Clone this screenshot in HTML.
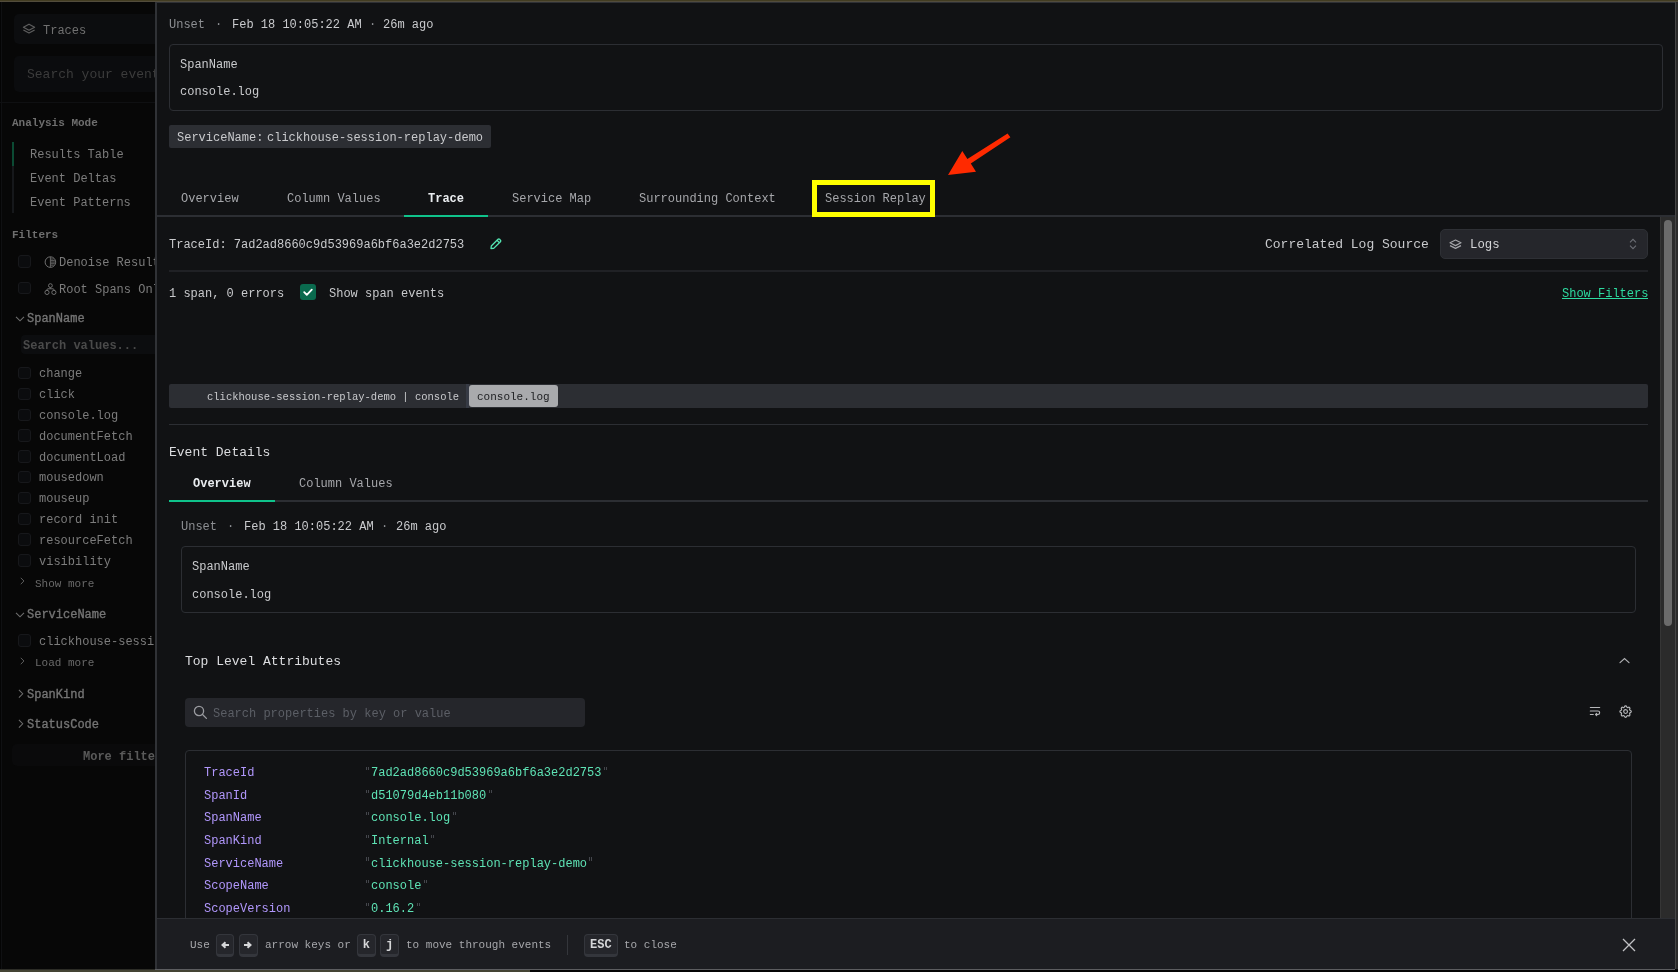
<!DOCTYPE html>
<html><head><meta charset="utf-8"><title>Trace</title>
<style>
html,body{margin:0;padding:0;width:1678px;height:972px;overflow:hidden;background:#070707;}
body{position:relative;font-family:"Liberation Mono",monospace;}
.t{position:absolute;white-space:pre;will-change:transform;}
.r{position:absolute;}
.kbd{background:#25262b;border:1px solid #34363c;border-bottom:3px solid #34363c;border-radius:4px;box-sizing:border-box;}
</style></head><body>
<div class="r" style="left:0px;top:0px;width:155px;height:972px;background:#070707;"></div>
<div class="r" style="left:0px;top:0px;width:1px;height:972px;background:#040404;"></div>
<div class="r" style="left:1px;top:0px;width:1px;height:972px;background:#0f1012;"></div>
<div class="r" style="left:14px;top:14.4px;width:150px;height:29.8px;background:#0c0d0f;border-radius:5px;"></div>
<svg class="r" style="left:22px;top:23px" width="14" height="12" viewBox="0 0 14 12"><path d="M7 1.2 L12.6 4.2 L7 7.2 L1.4 4.2 Z" fill="none" stroke="#5e5e5e" stroke-width="1.2" stroke-linejoin="round"/><path d="M1.4 7 L7 10 L12.6 7" fill="none" stroke="#5e5e5e" stroke-width="1.2" stroke-linejoin="round"/></svg>
<div class="t" style="left:43.00px;top:24.21px;font-size:12px;line-height:15px;color:#707070;">Traces</div>
<div class="r" style="left:14px;top:56px;width:150px;height:35.8px;background:#0b0c0e;border-radius:5px;"></div>
<div class="t" style="left:26.60px;top:66.64px;font-size:13px;line-height:16px;color:#3c3c3c;">Search your events</div>
<div class="r" style="left:0px;top:102px;width:155px;height:1px;background:#0f1012;"></div>
<div class="t" style="left:12.20px;top:115.87px;font-size:11px;line-height:14px;color:#6e6e6e;font-weight:700;">Analysis Mode</div>
<div class="r" style="left:12px;top:142px;width:2px;height:24px;background:#0b4a33;"></div>
<div class="r" style="left:12px;top:166px;width:2px;height:47px;background:#16181b;"></div>
<div class="t" style="left:30.20px;top:148.21px;font-size:12px;line-height:15px;color:#7c7c7c;">Results Table</div>
<div class="t" style="left:30.20px;top:172.21px;font-size:12px;line-height:15px;color:#7c7c7c;">Event Deltas</div>
<div class="t" style="left:30.20px;top:195.91px;font-size:12px;line-height:15px;color:#7c7c7c;">Event Patterns</div>
<div class="t" style="left:12.20px;top:228.47px;font-size:11px;line-height:14px;color:#6e6e6e;font-weight:700;">Filters</div>
<div class="r" style="left:18.4px;top:255.3px;width:12.3px;height:12.3px;background:#0b0c0e;border:1px solid #17181b;border-radius:3px;box-sizing:border-box;"></div>
<div class="r" style="left:18.4px;top:282.2px;width:12.3px;height:12.3px;background:#0b0c0e;border:1px solid #17181b;border-radius:3px;box-sizing:border-box;"></div>
<svg class="r" style="left:43.5px;top:255.5px" width="13" height="13" viewBox="0 0 13 13"><circle cx="6.4" cy="6.1" r="5.3" fill="none" stroke="#707070" stroke-width="1"/><path d="M6.4 0.8 V11.4 M6.4 3.0 H9.6 M6.4 4.6 H10.8 M6.4 6.1 H11.2 M6.4 7.7 H10.8 M6.4 9.2 H9.6" stroke="#707070" stroke-width="0.85"/></svg>
<div class="t" style="left:59.30px;top:256.01px;font-size:12px;line-height:15px;color:#7c7c7c;">Denoise Results</div>
<svg class="r" style="left:43.5px;top:282.5px" width="13" height="13" viewBox="0 0 13 13"><circle cx="6.4" cy="2.6" r="1.9" fill="none" stroke="#707070" stroke-width="1"/><circle cx="3" cy="9.4" r="2.1" fill="none" stroke="#707070" stroke-width="1"/><circle cx="9.9" cy="9.4" r="2.1" fill="none" stroke="#707070" stroke-width="1"/><path d="M6.4 4.5 V5.8 M3 7.3 V6.6 Q3 5.8 3.8 5.8 H9.1 Q9.9 5.8 9.9 6.6 V7.3" fill="none" stroke="#707070" stroke-width="1"/></svg>
<div class="t" style="left:59.30px;top:282.51px;font-size:12px;line-height:15px;color:#7c7c7c;">Root Spans Only</div>
<svg class="r" style="left:14.5px;top:315.5px" width="10" height="6" viewBox="0 0 10 6"><path d="M1 0.8 L5 4.8 L9 0.8" fill="none" stroke="#6e6e6e" stroke-width="1.1"/></svg>
<div class="t" style="left:27.40px;top:312.41px;font-size:12px;line-height:15px;color:#757575;-webkit-text-stroke:0.35px #757575;">SpanName</div>
<div class="r" style="left:20.9px;top:335.2px;width:140px;height:18.7px;background:#0c0d0f;border-radius:4px;"></div>
<div class="t" style="left:23.00px;top:338.81px;font-size:12px;line-height:15px;color:#4a4a4a;font-weight:700;">Search values...</div>
<div class="r" style="left:18.2px;top:366.90000000000003px;width:12.4px;height:12.4px;background:#0b0c0e;border:1px solid #17181b;border-radius:3px;box-sizing:border-box;"></div>
<div class="t" style="left:38.80px;top:367.31px;font-size:12px;line-height:15px;color:#7c7c7c;">change</div>
<div class="r" style="left:18.2px;top:387.72px;width:12.4px;height:12.4px;background:#0b0c0e;border:1px solid #17181b;border-radius:3px;box-sizing:border-box;"></div>
<div class="t" style="left:38.80px;top:388.13px;font-size:12px;line-height:15px;color:#7c7c7c;">click</div>
<div class="r" style="left:18.2px;top:408.54px;width:12.4px;height:12.4px;background:#0b0c0e;border:1px solid #17181b;border-radius:3px;box-sizing:border-box;"></div>
<div class="t" style="left:38.80px;top:408.95px;font-size:12px;line-height:15px;color:#7c7c7c;">console.log</div>
<div class="r" style="left:18.2px;top:429.36px;width:12.4px;height:12.4px;background:#0b0c0e;border:1px solid #17181b;border-radius:3px;box-sizing:border-box;"></div>
<div class="t" style="left:38.80px;top:429.77px;font-size:12px;line-height:15px;color:#7c7c7c;">documentFetch</div>
<div class="r" style="left:18.2px;top:450.18px;width:12.4px;height:12.4px;background:#0b0c0e;border:1px solid #17181b;border-radius:3px;box-sizing:border-box;"></div>
<div class="t" style="left:38.80px;top:450.59px;font-size:12px;line-height:15px;color:#7c7c7c;">documentLoad</div>
<div class="r" style="left:18.2px;top:471.00000000000006px;width:12.4px;height:12.4px;background:#0b0c0e;border:1px solid #17181b;border-radius:3px;box-sizing:border-box;"></div>
<div class="t" style="left:38.80px;top:471.41px;font-size:12px;line-height:15px;color:#7c7c7c;">mousedown</div>
<div class="r" style="left:18.2px;top:491.82000000000005px;width:12.4px;height:12.4px;background:#0b0c0e;border:1px solid #17181b;border-radius:3px;box-sizing:border-box;"></div>
<div class="t" style="left:38.80px;top:492.23px;font-size:12px;line-height:15px;color:#7c7c7c;">mouseup</div>
<div class="r" style="left:18.2px;top:512.64px;width:12.4px;height:12.4px;background:#0b0c0e;border:1px solid #17181b;border-radius:3px;box-sizing:border-box;"></div>
<div class="t" style="left:38.80px;top:513.05px;font-size:12px;line-height:15px;color:#7c7c7c;">record init</div>
<div class="r" style="left:18.2px;top:533.46px;width:12.4px;height:12.4px;background:#0b0c0e;border:1px solid #17181b;border-radius:3px;box-sizing:border-box;"></div>
<div class="t" style="left:38.80px;top:533.87px;font-size:12px;line-height:15px;color:#7c7c7c;">resourceFetch</div>
<div class="r" style="left:18.2px;top:554.28px;width:12.4px;height:12.4px;background:#0b0c0e;border:1px solid #17181b;border-radius:3px;box-sizing:border-box;"></div>
<div class="t" style="left:38.80px;top:554.69px;font-size:12px;line-height:15px;color:#7c7c7c;">visibility</div>
<svg class="r" style="left:19.5px;top:576.5px" width="5" height="8" viewBox="0 0 6 10"><path d="M0.8 1 L4.8 5 L0.8 9" fill="none" stroke="#6a6a6a" stroke-width="1.1"/></svg>
<div class="t" style="left:34.60px;top:576.57px;font-size:11px;line-height:14px;color:#6a6a6a;">Show more</div>
<svg class="r" style="left:14.5px;top:611.5px" width="10" height="6" viewBox="0 0 10 6"><path d="M1 0.8 L5 4.8 L9 0.8" fill="none" stroke="#6e6e6e" stroke-width="1.1"/></svg>
<div class="t" style="left:27.40px;top:608.01px;font-size:12px;line-height:15px;color:#757575;-webkit-text-stroke:0.35px #757575;">ServiceName</div>
<div class="r" style="left:18.2px;top:634.3px;width:12.4px;height:12.4px;background:#0b0c0e;border:1px solid #17181b;border-radius:3px;box-sizing:border-box;"></div>
<div class="t" style="left:38.80px;top:634.61px;font-size:12px;line-height:15px;color:#7c7c7c;">clickhouse-session-replay-demo</div>
<svg class="r" style="left:19.5px;top:656.5px" width="5" height="8" viewBox="0 0 6 10"><path d="M0.8 1 L4.8 5 L0.8 9" fill="none" stroke="#6a6a6a" stroke-width="1.1"/></svg>
<div class="t" style="left:35.30px;top:656.47px;font-size:11px;line-height:14px;color:#6a6a6a;">Load more</div>
<svg class="r" style="left:17.5px;top:689.2px" width="6" height="9.5" viewBox="0 0 6 10"><path d="M0.8 1 L4.8 5 L0.8 9" fill="none" stroke="#6e6e6e" stroke-width="1.1"/></svg>
<div class="t" style="left:27.30px;top:687.81px;font-size:12px;line-height:15px;color:#757575;-webkit-text-stroke:0.35px #757575;">SpanKind</div>
<svg class="r" style="left:17.5px;top:719.2px" width="6" height="9.5" viewBox="0 0 6 10"><path d="M0.8 1 L4.8 5 L0.8 9" fill="none" stroke="#6e6e6e" stroke-width="1.1"/></svg>
<div class="t" style="left:27.30px;top:717.71px;font-size:12px;line-height:15px;color:#757575;-webkit-text-stroke:0.35px #757575;">StatusCode</div>
<div class="r" style="left:12.1px;top:744.4px;width:150px;height:22px;background:#0a0a0b;border-radius:5px;"></div>
<div class="t" style="left:82.80px;top:750.11px;font-size:12px;line-height:15px;color:#5a5a5a;font-weight:700;">More filters</div>
<div class="r" style="left:155px;top:2px;width:1523px;height:967px;background:#111214;"></div>
<div class="r" style="left:155px;top:2px;width:2px;height:967px;background:#303236;"></div>
<div class="r" style="left:155px;top:2px;width:1523px;height:1px;background:#2e3035;"></div>
<div class="r" style="left:1675px;top:2px;width:1px;height:967px;background:#464646;"></div>
<div class="r" style="left:1676px;top:2px;width:2px;height:967px;background:#2a2a2a;"></div>
<div class="t" style="left:169.00px;top:18.21px;font-size:12px;line-height:15px;color:#8d8f93;">Unset</div>
<div class="t" style="left:214.60px;top:18.21px;font-size:12px;line-height:15px;color:#8d8f93;">·</div>
<div class="t" style="left:232.00px;top:18.21px;font-size:12px;line-height:15px;color:#c9cacd;">Feb 18 10:05:22 AM</div>
<div class="t" style="left:368.80px;top:18.21px;font-size:12px;line-height:15px;color:#8d8f93;">·</div>
<div class="t" style="left:383.40px;top:18.21px;font-size:12px;line-height:15px;color:#c9cacd;">26m ago</div>
<div class="r" style="left:169px;top:44.2px;width:1494px;height:66.4px;background:transparent;border:1px solid #2c2e33;border-radius:4px;box-sizing:border-box;"></div>
<div class="t" style="left:180.20px;top:58.21px;font-size:12px;line-height:15px;color:#c9cacd;">SpanName</div>
<div class="t" style="left:180.20px;top:85.21px;font-size:12px;line-height:15px;color:#c9cacd;">console.log</div>
<div class="r" style="left:169px;top:125px;width:322px;height:23px;background:#2c2e33;border-radius:2px;"></div>
<div class="t" style="left:177.00px;top:131.21px;font-size:12px;line-height:15px;color:#c9cacd;">ServiceName:</div>
<div class="t" style="left:267.00px;top:131.21px;font-size:12px;line-height:15px;color:#c9cacd;">clickhouse-session-replay-demo</div>
<div class="r" style="left:157px;top:214.5px;width:1518px;height:2px;background:#2c2e33;"></div>
<div class="t" style="left:181.30px;top:192.21px;font-size:12px;line-height:15px;color:#a6a7ab;">Overview</div>
<div class="t" style="left:287.00px;top:192.21px;font-size:12px;line-height:15px;color:#a6a7ab;">Column Values</div>
<div class="t" style="left:428.30px;top:192.21px;font-size:12px;line-height:15px;color:#e9ecef;font-weight:700;">Trace</div>
<div class="t" style="left:512.00px;top:192.21px;font-size:12px;line-height:15px;color:#a6a7ab;">Service Map</div>
<div class="t" style="left:639.00px;top:192.21px;font-size:12px;line-height:15px;color:#a6a7ab;">Surrounding Context</div>
<div class="t" style="left:824.60px;top:192.21px;font-size:12px;line-height:15px;color:#a6a7ab;">Session Replay</div>
<div class="r" style="left:404px;top:214.5px;width:84px;height:2.5px;background:#0fc38b;"></div>
<div class="r" style="left:812px;top:180px;width:123px;height:37px;background:transparent;border:5px solid #ffff00;box-sizing:border-box;"></div>
<svg class="r" style="left:0;top:0" width="1678" height="972" viewBox="0 0 1678 972"><polygon points="948,175 962.3,151 967.4,158.9 1007.6,133.5 1010.4,137.2 970.8,163.5 976,171.7" fill="#ff2a00"/></svg>
<div class="r" style="left:1660px;top:216.5px;width:15px;height:701.5px;background:#2b2b2b;"></div>
<div class="r" style="left:1660px;top:216.5px;width:1px;height:701.5px;background:#363636;"></div>
<div class="r" style="left:1664px;top:219.5px;width:8px;height:406px;background:#6b6b6b;border-radius:4px;"></div>
<div class="t" style="left:169.00px;top:238.21px;font-size:12px;line-height:15px;color:#c9cacd;">TraceId: 7ad2ad8660c9d53969a6bf6a3e2d2753</div>
<svg class="r" style="left:489px;top:237.5px" width="13" height="12" viewBox="0 0 13 12"><path d="M2 10.5 L2.3 8 L9 1.3 Q9.8 0.6 10.6 1.3 L11.4 2.1 Q12.1 2.9 11.4 3.7 L4.7 10.4 Z M8 2.3 L10.4 4.7" fill="none" stroke="#55e6b3" stroke-width="1.3" stroke-linejoin="round"/></svg>
<div class="t" style="left:1264.70px;top:237.44px;font-size:13px;line-height:16px;color:#c9cacd;">Correlated Log Source</div>
<div class="r" style="left:1440.3px;top:228.5px;width:207.7px;height:30.3px;background:#25262b;border:1px solid #2e3035;border-radius:5px;box-sizing:border-box;"></div>
<svg class="r" style="left:1449px;top:238.5px" width="13" height="11" viewBox="0 0 13 11"><path d="M6.5 1 L12 3.8 L6.5 6.6 L1 3.8 Z" fill="none" stroke="#a3a4a8" stroke-width="1.2" stroke-linejoin="round"/><path d="M1 6.6 L6.5 9.4 L12 6.6" fill="none" stroke="#a3a4a8" stroke-width="1.2" stroke-linejoin="round"/></svg>
<div class="t" style="left:1470.30px;top:238.43px;font-size:12.3px;line-height:15px;color:#d5d6d8;">Logs</div>
<svg class="r" style="left:1629px;top:237.5px" width="8" height="12" viewBox="0 0 8 12"><path d="M1 4.3 L4 1.3 L7 4.3 M1 7.7 L4 10.7 L7 7.7" fill="none" stroke="#6c6e75" stroke-width="1.1"/></svg>
<div class="r" style="left:169px;top:270px;width:1479px;height:2px;background:#202125;"></div>
<div class="t" style="left:169.00px;top:287.31px;font-size:12px;line-height:15px;color:#c9cacd;">1 span, 0 errors</div>
<div class="r" style="left:300px;top:284.4px;width:16px;height:16px;background:#0a6a4e;border-radius:3px;"></div>
<svg class="r" style="left:300px;top:284.4px" width="16" height="16" viewBox="0 0 16 16"><path d="M4.2 8.2 L6.8 10.8 L11.8 5.6" fill="none" stroke="#ffffff" stroke-width="1.8" stroke-linecap="round" stroke-linejoin="round"/></svg>
<div class="t" style="left:328.60px;top:287.31px;font-size:12px;line-height:15px;color:#c9cacd;">Show span events</div>
<div class="t" style="left:1561.60px;top:287.11px;font-size:12px;line-height:15px;color:#2ddba0;">Show Filters</div>
<div class="r" style="left:1561.6px;top:297.8px;width:86.4px;height:1.4px;background:#2ddba0;"></div>
<div class="r" style="left:169px;top:384.3px;width:1479px;height:23.7px;background:#2c2e33;border-radius:2px;"></div>
<div class="t" style="left:206.80px;top:390.81px;font-size:10.5px;line-height:13px;color:#c9cacd;">clickhouse-session-replay-demo | console</div>
<div class="r" style="left:466px;top:384.3px;width:3.2px;height:23.7px;background:#363a44;"></div>
<div class="r" style="left:469px;top:385px;width:89px;height:22px;background:#a9aaad;border-radius:3px;"></div>
<div class="t" style="left:477.40px;top:390.37px;font-size:11px;line-height:14px;color:#1d1e21;">console.log</div>
<div class="r" style="left:169px;top:424px;width:1479px;height:1.3px;background:#2c2e33;"></div>
<div class="t" style="left:169.30px;top:444.94px;font-size:13px;line-height:16px;color:#dcdde0;">Event Details</div>
<div class="r" style="left:169px;top:499.5px;width:1479px;height:2px;background:#2c2e33;"></div>
<div class="r" style="left:169px;top:499.5px;width:105.7px;height:2px;background:#0fc38b;"></div>
<div class="t" style="left:192.80px;top:477.21px;font-size:12px;line-height:15px;color:#e9ecef;font-weight:700;">Overview</div>
<div class="t" style="left:299.00px;top:477.21px;font-size:12px;line-height:15px;color:#a6a7ab;">Column Values</div>
<div class="t" style="left:181.20px;top:520.21px;font-size:12px;line-height:15px;color:#8d8f93;">Unset</div>
<div class="t" style="left:226.80px;top:520.21px;font-size:12px;line-height:15px;color:#8d8f93;">·</div>
<div class="t" style="left:244.40px;top:520.21px;font-size:12px;line-height:15px;color:#c9cacd;">Feb 18 10:05:22 AM</div>
<div class="t" style="left:380.80px;top:520.21px;font-size:12px;line-height:15px;color:#8d8f93;">·</div>
<div class="t" style="left:395.80px;top:520.21px;font-size:12px;line-height:15px;color:#c9cacd;">26m ago</div>
<div class="r" style="left:181px;top:546.3px;width:1455px;height:67px;background:transparent;border:1px solid #2c2e33;border-radius:4px;box-sizing:border-box;"></div>
<div class="t" style="left:192.40px;top:560.01px;font-size:12px;line-height:15px;color:#c9cacd;">SpanName</div>
<div class="t" style="left:192.40px;top:587.81px;font-size:12px;line-height:15px;color:#c9cacd;">console.log</div>
<div class="t" style="left:185.20px;top:654.44px;font-size:13px;line-height:16px;color:#dcdde0;">Top Level Attributes</div>
<svg class="r" style="left:1619px;top:656.5px" width="11" height="7" viewBox="0 0 11 7"><path d="M1 5.6 L5.5 1.6 L10 5.6" fill="none" stroke="#b0b1b4" stroke-width="1.2" stroke-linecap="round"/></svg>
<div class="r" style="left:185px;top:697.6px;width:400px;height:29.8px;background:#25262b;border-radius:4px;"></div>
<svg class="r" style="left:191.6px;top:704.3px" width="16" height="16" viewBox="0 0 16 16"><circle cx="7" cy="7" r="4.6" fill="none" stroke="#9a9ba0" stroke-width="1.3"/><path d="M10.3 10.3 L14.4 14.4" stroke="#9a9ba0" stroke-width="1.3" stroke-linecap="round"/></svg>
<div class="t" style="left:213.30px;top:706.91px;font-size:12px;line-height:15px;color:#5c5f66;">Search properties by key or value</div>
<svg class="r" style="left:1587.7px;top:704px" width="14" height="14" viewBox="0 0 24 24"><path d="M4 6l16 0 M4 18l5 0 M4 12h13a3 3 0 0 1 0 6h-4l2 -2m0 4l-2 -2" fill="none" stroke="#b5b6b9" stroke-width="2" stroke-linecap="round" stroke-linejoin="round"/></svg>
<svg class="r" style="left:1617.9px;top:703.9px" width="15.2" height="15.2" viewBox="0 0 24 24"><path d="M10.325 4.317c.426 -1.756 2.924 -1.756 3.35 0a1.724 1.724 0 0 0 2.573 1.066c1.543 -.94 3.31 .826 2.37 2.37a1.724 1.724 0 0 0 1.065 2.572c1.756 .426 1.756 2.924 0 3.35a1.724 1.724 0 0 0 -1.066 2.573c.94 1.543 -.826 3.31 -2.37 2.37a1.724 1.724 0 0 0 -2.572 1.065c-.426 1.756 -2.924 1.756 -3.35 0a1.724 1.724 0 0 0 -2.573 -1.066c-1.543 .94 -3.31 -.826 -2.37 -2.37a1.724 1.724 0 0 0 -1.065 -2.572c-1.756 -.426 -1.756 -2.924 0 -3.35a1.724 1.724 0 0 0 1.066 -2.573c-.94 -1.543 .826 -3.31 2.37 -2.37c1 .608 2.296 .07 2.572 -1.065z M9 12a3 3 0 1 0 6 0a3 3 0 0 0 -6 0" fill="none" stroke="#b5b6b9" stroke-width="1.9" stroke-linecap="round" stroke-linejoin="round"/></svg>
<div class="r" style="left:185px;top:749.8px;width:1447px;height:200px;background:transparent;border:1px solid #2c2e33;border-radius:4px;box-sizing:border-box;"></div>
<div class="t" style="left:204.30px;top:766.11px;font-size:12px;line-height:15px;color:#b197fc;">TraceId</div>
<div class="r" style="left:365.6px;top:767.0px;width:1px;height:3.2px;background:#44464c;"></div>
<div class="r" style="left:367.6px;top:767.0px;width:1px;height:3.2px;background:#44464c;"></div>
<div class="t" style="left:370.80px;top:766.11px;font-size:12px;line-height:15px;color:#5ee3b5;">7ad2ad8660c9d53969a6bf6a3e2d2753</div>
<div class="r" style="left:603.8000000000001px;top:767.0px;width:1px;height:3.2px;background:#44464c;"></div>
<div class="r" style="left:605.8000000000001px;top:767.0px;width:1px;height:3.2px;background:#44464c;"></div>
<div class="t" style="left:204.30px;top:788.71px;font-size:12px;line-height:15px;color:#b197fc;">SpanId</div>
<div class="r" style="left:365.6px;top:789.6px;width:1px;height:3.2px;background:#44464c;"></div>
<div class="r" style="left:367.6px;top:789.6px;width:1px;height:3.2px;background:#44464c;"></div>
<div class="t" style="left:370.80px;top:788.71px;font-size:12px;line-height:15px;color:#5ee3b5;">d51079d4eb11b080</div>
<div class="r" style="left:488.6px;top:789.6px;width:1px;height:3.2px;background:#44464c;"></div>
<div class="r" style="left:490.6px;top:789.6px;width:1px;height:3.2px;background:#44464c;"></div>
<div class="t" style="left:204.30px;top:811.31px;font-size:12px;line-height:15px;color:#b197fc;">SpanName</div>
<div class="r" style="left:365.6px;top:812.2px;width:1px;height:3.2px;background:#44464c;"></div>
<div class="r" style="left:367.6px;top:812.2px;width:1px;height:3.2px;background:#44464c;"></div>
<div class="t" style="left:370.80px;top:811.31px;font-size:12px;line-height:15px;color:#5ee3b5;">console.log</div>
<div class="r" style="left:452.6px;top:812.2px;width:1px;height:3.2px;background:#44464c;"></div>
<div class="r" style="left:454.6px;top:812.2px;width:1px;height:3.2px;background:#44464c;"></div>
<div class="t" style="left:204.30px;top:833.91px;font-size:12px;line-height:15px;color:#b197fc;">SpanKind</div>
<div class="r" style="left:365.6px;top:834.8000000000001px;width:1px;height:3.2px;background:#44464c;"></div>
<div class="r" style="left:367.6px;top:834.8000000000001px;width:1px;height:3.2px;background:#44464c;"></div>
<div class="t" style="left:370.80px;top:833.91px;font-size:12px;line-height:15px;color:#5ee3b5;">Internal</div>
<div class="r" style="left:431.00000000000006px;top:834.8000000000001px;width:1px;height:3.2px;background:#44464c;"></div>
<div class="r" style="left:433.00000000000006px;top:834.8000000000001px;width:1px;height:3.2px;background:#44464c;"></div>
<div class="t" style="left:204.30px;top:856.51px;font-size:12px;line-height:15px;color:#b197fc;">ServiceName</div>
<div class="r" style="left:365.6px;top:857.4px;width:1px;height:3.2px;background:#44464c;"></div>
<div class="r" style="left:367.6px;top:857.4px;width:1px;height:3.2px;background:#44464c;"></div>
<div class="t" style="left:370.80px;top:856.51px;font-size:12px;line-height:15px;color:#5ee3b5;">clickhouse-session-replay-demo</div>
<div class="r" style="left:589.4px;top:857.4px;width:1px;height:3.2px;background:#44464c;"></div>
<div class="r" style="left:591.4px;top:857.4px;width:1px;height:3.2px;background:#44464c;"></div>
<div class="t" style="left:204.30px;top:879.11px;font-size:12px;line-height:15px;color:#b197fc;">ScopeName</div>
<div class="r" style="left:365.6px;top:880.0px;width:1px;height:3.2px;background:#44464c;"></div>
<div class="r" style="left:367.6px;top:880.0px;width:1px;height:3.2px;background:#44464c;"></div>
<div class="t" style="left:370.80px;top:879.11px;font-size:12px;line-height:15px;color:#5ee3b5;">console</div>
<div class="r" style="left:423.8px;top:880.0px;width:1px;height:3.2px;background:#44464c;"></div>
<div class="r" style="left:425.8px;top:880.0px;width:1px;height:3.2px;background:#44464c;"></div>
<div class="t" style="left:204.30px;top:901.71px;font-size:12px;line-height:15px;color:#b197fc;">ScopeVersion</div>
<div class="r" style="left:365.6px;top:902.6px;width:1px;height:3.2px;background:#44464c;"></div>
<div class="r" style="left:367.6px;top:902.6px;width:1px;height:3.2px;background:#44464c;"></div>
<div class="t" style="left:370.80px;top:901.71px;font-size:12px;line-height:15px;color:#5ee3b5;">0.16.2</div>
<div class="r" style="left:416.6px;top:902.6px;width:1px;height:3.2px;background:#44464c;"></div>
<div class="r" style="left:418.6px;top:902.6px;width:1px;height:3.2px;background:#44464c;"></div>
<div class="r" style="left:157px;top:918px;width:1518px;height:51px;background:#1c1d21;"></div>
<div class="r" style="left:157px;top:918px;width:1518px;height:1px;background:#2c2e33;"></div>
<div class="t" style="left:189.60px;top:938.17px;font-size:11px;line-height:14px;color:#a6a7ab;">Use</div>
<div class="r kbd" style="left:216px;top:933.5px;width:18.3px;height:23.5px;"></div>
<svg class="r" style="left:220.2px;top:941px" width="10" height="8" viewBox="0 0 10 8"><path d="M3 4 H9 M5.5 1.2 L2.5 4 L5.5 6.8" fill="none" stroke="#d5d6d8" stroke-width="2" stroke-linejoin="miter"/></svg>
<div class="r kbd" style="left:238.7px;top:933.5px;width:19.3px;height:23.5px;"></div>
<svg class="r" style="left:243.3px;top:941px" width="10" height="8" viewBox="0 0 10 8"><path d="M1 4 H7 M4.5 1.2 L7.5 4 L4.5 6.8" fill="none" stroke="#d5d6d8" stroke-width="2" stroke-linejoin="miter"/></svg>
<div class="r kbd" style="left:357.2px;top:933.5px;width:18.6px;height:23.5px;"></div>
<div class="t" style="left:357.2px;top:936px;width:18.6px;text-align:center;font-size:12px;line-height:18px;color:#d5d6d8;font-weight:700;">k</div>
<div class="r kbd" style="left:380.1px;top:933.5px;width:19.3px;height:23.5px;"></div>
<div class="t" style="left:380.1px;top:936px;width:19.3px;text-align:center;font-size:12px;line-height:18px;color:#d5d6d8;font-weight:700;">j</div>
<div class="r kbd" style="left:584.2px;top:933.5px;width:33.7px;height:23.5px;"></div>
<div class="t" style="left:584.2px;top:936px;width:33.7px;text-align:center;font-size:12px;line-height:18px;color:#d5d6d8;font-weight:700;">ESC</div>
<div class="t" style="left:264.80px;top:938.17px;font-size:11px;line-height:14px;color:#a6a7ab;">arrow keys or</div>
<div class="t" style="left:406.00px;top:938.17px;font-size:11px;line-height:14px;color:#a6a7ab;">to move through events</div>
<div class="r" style="left:567px;top:934.6px;width:1px;height:20.2px;background:#34363b;"></div>
<div class="t" style="left:624.30px;top:938.17px;font-size:11px;line-height:14px;color:#a6a7ab;">to close</div>
<svg class="r" style="left:1621px;top:937px" width="16" height="16" viewBox="0 0 16 16"><path d="M2 2 L14 14 M14 2 L2 14" stroke="#c1c2c5" stroke-width="1.3"/></svg>
<div class="r" style="left:0px;top:0px;width:1678px;height:1px;background:#433d22;"></div>
<div class="r" style="left:0px;top:1px;width:1678px;height:1px;background:#524c3c;"></div>
<div class="r" style="left:0px;top:969px;width:155px;height:1px;background:#2c2c26;"></div>
<div class="r" style="left:155px;top:969px;width:1520px;height:1px;background:#5c5d60;"></div>
<div class="r" style="left:0px;top:970px;width:530px;height:2px;background:#444434;"></div>
<div class="r" style="left:530px;top:970px;width:1148px;height:2px;background:#050505;"></div>
</body></html>
